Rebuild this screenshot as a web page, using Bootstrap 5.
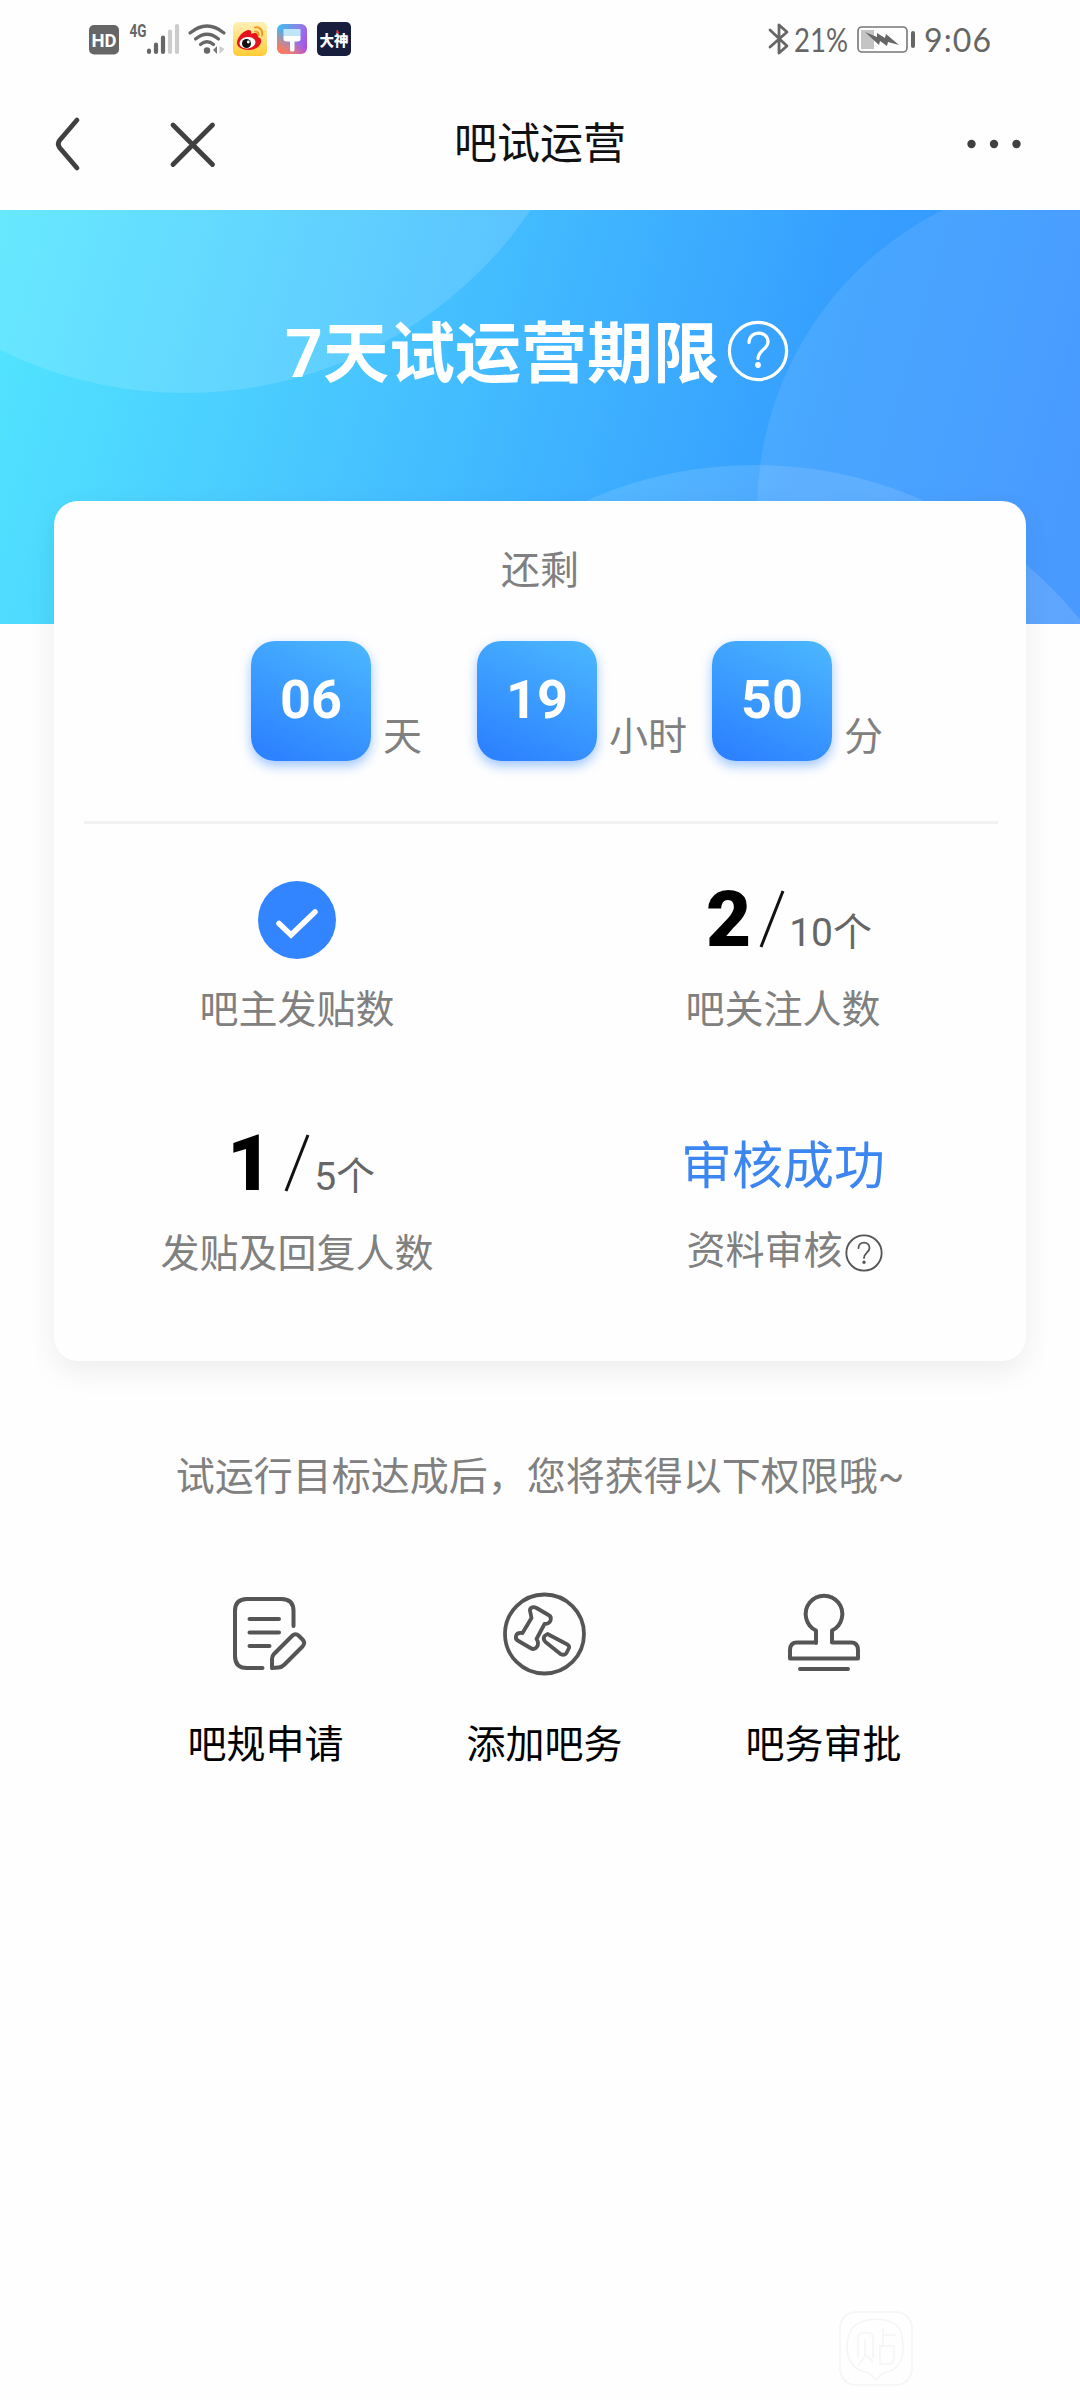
<!DOCTYPE html>
<html lang="zh-CN">
<head>
<meta charset="utf-8">
<meta name="viewport" content="width=device-width, initial-scale=1">
<title>吧试运营</title>
<link href="https://cdn.jsdelivr.net/npm/bootstrap@5.3.0/dist/css/bootstrap.min.css" rel="stylesheet">
<style>
body{font-family:Roboto,"Noto Sans CJK SC",sans-serif;font-size:39px;line-height:58px;color:#000;background:#fefefe;height:2400px;overflow:hidden}
svg{display:block;flex:none}
.status-bar{height:80px;padding:0 90px 0 88px}
.status-bar svg{height:80px}
.title-bar{height:130px;padding:0 58px 2px 52px}
.title-bar h1{font-size:43px;line-height:64px;font-weight:400;margin:0;color:#111}
.hero{height:414px;background:linear-gradient(106deg,#52e6ff 0%,#48c6ff 33%,#369fff 72%,#388fff 100%)}
.hero-circles{left:0;top:0}
.hero h2{font-size:66px;line-height:96px;font-weight:700;margin:0;color:#fff;padding-top:97px}
.hero-help{margin:110px 6px 0 8px}
.panel{width:972px;height:860px;margin:-123px auto 0;border:0;border-radius:24px;background:#fefefe;box-shadow:0 10px 30px rgba(0,0,0,.07)}
.remain{margin-top:41px}
.muted{color:#808080}
.countdown{padding-left:197px;margin-top:41px}
.tile{width:120px;height:120px;border-radius:24px;background:linear-gradient(205deg,#4cb8ff 0%,#2d83ff 90%);box-shadow:0 5px 12px rgba(45,131,255,.45);color:#fff;font-weight:700;font-size:54px;line-height:117px;text-align:center}
.unit{margin-left:12px;margin-bottom:-5px}
.unit-day{width:94px}
.unit-hour{width:103px}
.rule{height:3px;flex:none;background:#f2f2f2;margin:60px 28px 0 30px}
.metrics{margin-top:57px}
.metric{height:244px}
.metric .muted{margin-top:22px}
.figure-line{height:78px}
.big{font-size:78px;line-height:78px;font-weight:900}
.slash{align-self:flex-start;margin-top:9px}
.rest{color:#666}
.passed{font-size:51px;line-height:84px}
.passed{color:#3b86f0}
.metric .review{margin-top:19px;padding-left:3px}
.review svg{margin:12px 0 0 2px}
.tip{margin-top:87px}
.perks{padding:0 117px 0 126px;margin-top:86px}
.perks svg{margin-bottom:40px}
.mark-logo{margin:536px 0 0 838px}
</style>
</head>
<body>
<header class="status-bar d-flex justify-content-between">
 <svg width="266" height="80" viewBox="88 0 266 80">
  <defs>
   <linearGradient id="wb" x2="0" y2="1"><stop stop-color="#fff0b8"/><stop offset="1" stop-color="#ffcd35"/></linearGradient>
   <linearGradient id="br" x1="0" y1=".3" x2="1" y2=".7"><stop stop-color="#46b9e8"/><stop offset=".55" stop-color="#8b83e8"/><stop offset="1" stop-color="#a74fe8"/></linearGradient>
   <linearGradient id="br2" x1=".8" y1="0" x2=".1" y2="1"><stop offset=".45" stop-color="#ff7a5c" stop-opacity="0"/><stop offset=".9" stop-color="#ff7a5c"/></linearGradient>
  </defs>
  <rect x="89" y="25" width="30" height="29.500" rx="5" fill="#666"/>
  <text x="91.500" y="46.500" font-family="Roboto" font-weight="700" font-size="19" fill="#fff" textLength="25" lengthAdjust="spacingAndGlyphs">HD</text>
  <text x="129.500" y="37" font-family="Roboto" font-weight="700" font-size="18" fill="#666" textLength="17" lengthAdjust="spacingAndGlyphs">4G</text>
  <g stroke-width="4.200" stroke-linecap="round" stroke="#666"><path d="M149 50.500v1.500M156 44.500v7.500M163 37.500v14.500"/><path d="M170 31.500v20.500M177 26v26" stroke="#ccc"/></g>
  <g fill="none" stroke="#666" stroke-width="3.200" stroke-linecap="round"><path d="M190 33Q207 19 224 33M195.500 39Q207 29.500 218.500 39M200.500 44.500Q207 39 213.500 44.500"/></g>
  <circle cx="207" cy="50.500" r="3.200" fill="#666"/><path d="M217 46v8l-4-4z" fill="#777"/><path d="M219.500 46v8l5-5z" fill="#ccc"/>
  <rect x="233" y="22" width="34" height="34" rx="5" fill="url(#wb)"/>
  <path d="M237 43c0-6 7-13 12-13 2 0 3 2 2 4 4-2 8-1 7 3 7 2 2 13-9 13-7 0-12-3-12-7z" fill="#e3141b"/>
  <ellipse cx="247.500" cy="42.800" rx="8" ry="5.700" fill="#fff" transform="rotate(-8 247 43)"/><circle cx="246.500" cy="43.500" r="4.500" fill="#111"/><circle cx="248.300" cy="42" r="1.400" fill="#fff"/>
  <path d="M255 27.500c5-1 8 3 7 8M255 31.500c3 0 4 1.500 3.500 4" fill="none" stroke="#f49a23" stroke-width="2" stroke-linecap="round"/>
  <rect x="277" y="24" width="30" height="30" rx="6" fill="url(#br)"/><rect x="277" y="24" width="30" height="30" rx="6" fill="url(#br2)"/>
  <path d="M283.500 29h17v7h-17z" fill="#bfe6f8"/><path d="M283.500 36h17v3q0 2.500-3 2.500h-3V50q0 1.500-2.200 1.500T290 50v-8.500h-3.500q-3 0-3-2.500z" fill="#fff"/>
  <rect x="317" y="22" width="34" height="34" rx="5" fill="#181e3d"/>
  <text x="319.500" y="45.500" font-family="Noto Sans CJK SC" font-weight="900" font-size="14.500" fill="#fff">大神</text><path d="M337 30l2 3h-2z" fill="#e33" stroke="#e33"/>
 </svg>
 <svg width="226" height="80" viewBox="764 0 226 80">
  <path d="M770 30l17 16-8 7V25l8 7-17 15" fill="none" stroke="#666" stroke-width="2.800" stroke-linejoin="round" stroke-linecap="round"/>
  <text x="794" y="51.500" font-family="Lato" font-size="32" fill="#666" textLength="54" lengthAdjust="spacingAndGlyphs">21%</text>
  <rect x="858" y="27" width="49" height="25" rx="4" fill="none" stroke="#777" stroke-width="1.600"/>
  <rect x="861" y="30" width="13" height="19" fill="#c4c4c4"/>
  <path d="M865 32l12 5v-4l8 5 1-4 13 11-11-3-1 4-7-5-1 4z" fill="#666"/>
  <path d="M913 33v13" stroke="#666" stroke-width="4" stroke-linecap="round"/>
  <text x="924" y="51.500" font-family="Lato" font-size="32" fill="#666" textLength="67">9:06</text>
 </svg>
</header>
<nav class="title-bar position-relative d-flex align-items-center justify-content-between">
 <svg width="166" height="56" viewBox="52 116 166 56" fill="none" stroke="#404040" stroke-width="4.800" stroke-linecap="round"><path d="M77 120L59.500 140.500Q57 144 59.500 147.500L77 168M173 125L212.500 164.500M212.500 125L173 164.500"/></svg>
 <h1 class="position-absolute start-50 translate-middle-x">吧试运营</h1>
 <svg width="56" height="10" viewBox="965 139 56 10" fill="#404040"><circle cx="970.500" cy="144" r="4.200"/><circle cx="993" cy="144" r="4.200"/><circle cx="1015.500" cy="144" r="4.200"/></svg>
</nav>
<section class="hero position-relative">
 <svg class="hero-circles position-absolute" width="1080" height="414" viewBox="0 210 1080 414" fill="#fff"><circle cx="185" cy="-25" r="418" fill-opacity=".13"/><circle cx="1092" cy="510" r="335" fill-opacity=".09"/><circle cx="755" cy="884" r="419" fill-opacity=".12"/></svg>
 <div class="position-relative d-flex justify-content-center">
  <h2>7天试运营期限</h2>
  <svg class="hero-help" width="62" height="62" viewBox="0 0 62 62" fill="none" stroke="#fff" stroke-width="3.200" stroke-linecap="round"><circle cx="31" cy="31" r="28.600"/><path d="M22 22.500C22 10 41 10 41 22c0 7-10 8.500-10 16.500"/><circle cx="31" cy="45" r="1.300" fill="#fff"/></svg>
 </div>
</section>
<main class="card panel">
 <div class="remain text-center muted">还剩</div>
 <div class="countdown d-flex align-items-end muted">
  <div class="tile">06</div><div class="unit unit-day">天</div>
  <div class="tile">19</div><div class="unit unit-hour">小时</div>
  <div class="tile">50</div><div class="unit">分</div>
 </div>
 <div class="rule"></div>
 <div class="row g-0 text-center metrics">
  <div class="col-6 metric">
   <div class="figure-line d-flex justify-content-center"><svg width="78" height="78" viewBox="258 881 78 78"><circle cx="297" cy="920" r="39" fill="#3385ff"/><path d="M279 923.500L291 935L315 912" fill="none" stroke="#fff" stroke-width="5.500" stroke-linecap="round"/></svg></div>
   <div class="muted">吧主发贴数</div>
  </div>
  <div class="col-6 metric">
   <div class="figure-line d-flex justify-content-center align-items-baseline ps-2 ms-1"><span class="big">2</span><svg class="slash ms-2" width="26" height="58" viewBox="0 0 26 58"><path d="M24 1L2 57" stroke="#111" stroke-width="3"/></svg><span class="rest ms-1">10个</span></div>
   <div class="muted">吧关注人数</div>
  </div>
  <div class="col-6 metric">
   <div class="figure-line d-flex justify-content-center align-items-baseline ps-2"><span class="big me-1">1</span><svg class="slash ms-2 me-1" width="26" height="58" viewBox="0 0 26 58"><path d="M24 1L2 57" stroke="#111" stroke-width="3"/></svg><span class="rest">5个</span></div>
   <div class="muted">发贴及回复人数</div>
  </div>
  <div class="col-6 metric">
   <div class="figure-line passed">审核成功</div>
   <div class="muted review d-flex justify-content-center">资料审核<svg width="38" height="38" viewBox="0 0 62 62" fill="none" stroke="#555" stroke-width="3" stroke-linecap="round"><circle cx="31" cy="31" r="28.800"/><path d="M22 23C22 11 40 11 40 23c0 7-9 8-9 16"/><circle cx="31" cy="46" r="1.300" fill="#555"/></svg></div>
  </div>
 </div>
</main>
<div class="tip text-center muted">试运行目标达成后，您将获得以下权限哦~</div>
<div class="perks d-flex">
 <div class="flex-fill w-100 d-flex flex-column align-items-center">
  <svg width="84" height="84" viewBox="225 1592 84 84" fill="none" stroke="#555" stroke-width="4" stroke-linecap="round" stroke-linejoin="round"><path d="M294.500 1626V1611Q294.500 1599 282.500 1599H248Q236 1599 236 1611V1656Q236 1668 248 1668H263.500M250.500 1619h29.500M250.500 1632.500h29.500M250.500 1646h20M273 1668v-9q0-3 2-5l18-18q3.500-3.500 7 0l4 4q2.500 3.500-.500 6.500l-18 18q-3 3-6 3z"/></svg>
  <div>吧规申请</div>
 </div>
 <div class="flex-fill w-100 d-flex flex-column align-items-center">
  <svg width="84" height="84" viewBox="502.500 1592 84 84" fill="none" stroke="#555" stroke-width="3.800" stroke-linecap="round" stroke-linejoin="round"><circle cx="544" cy="1634" r="39.500"/><path d="M530 1613c-2-5 2-7 6-5l12 7c4 2 3 9-4 9l-8 15c4 6-1 12-6 9l-12-7c-4-2-4-9 4-8l9-15zM547 1634l19 10q4 2 2 5l-2 4q-2 3-6 1l-15-12q-3-3-1-6z"/></svg>
  <div>添加吧务</div>
 </div>
 <div class="flex-fill w-100 d-flex flex-column align-items-center">
  <svg width="84" height="84" viewBox="782 1592 84 84" fill="none" stroke="#555" stroke-width="4" stroke-linecap="round"><path d="M816 1643V1630.500A18.300 18.300 0 1 1 832 1630.500V1642.500H851Q858 1642.500 858 1650V1658.500H790V1650Q790 1642.500 797 1642.500H816M800 1669h48" stroke-linejoin="round"/></svg>
  <div>吧务审批</div>
 </div>
</div>
<svg class="mark-logo" width="76" height="76" viewBox="838 2312 76 76" fill="none" stroke="#f5f5f5" stroke-width="1.600"><rect x="840" y="2314" width="72" height="73" rx="16"/><path d="M869 2375C840 2370 847 2340 850 2334C857 2317 896 2317 901 2334C907 2358 900 2373 883 2375L876 2382Z"/><path d="M858 2360v-20q0-5 5-5h5q5 0 5 5v20M865 2341v17l-7 10M866 2357l7 7M883 2330v18M883 2337h13M880 2366v-18h14v12q0 6-6 6z"/></svg>
<script src="https://cdn.jsdelivr.net/npm/bootstrap@5.3.0/dist/js/bootstrap.bundle.min.js"></script>
</body>
</html>
